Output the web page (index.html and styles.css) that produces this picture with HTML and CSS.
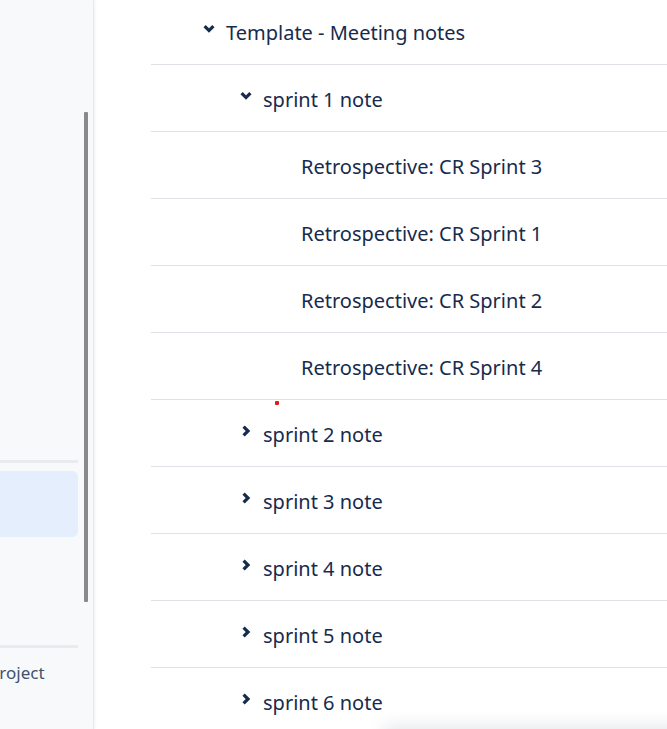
FILE: index.html
```html
<!DOCTYPE html>
<html>
<head>
<meta charset="utf-8">
<link rel="stylesheet" href="styles.css">
</head>
<body>
<div class="app">
  <aside class="sidebar">
    <div class="side-top"></div>
    <div class="side-sep"></div>
    <div class="side-active"></div>
    <div class="side-gap"></div>
    <div class="side-sep"></div>
    <div class="side-item">Project</div>
    <div class="scrollbar"></div>
  </aside>
  <main class="main">
    <ul class="tree">
      <li class="row lvl0"><span class="chev"><svg viewBox="0 0 26 26" width="26" height="26"><path d="M4.6 8.2 L9 12.6 L13.4 8.2" /></svg></span><span class="label">Template - Meeting notes</span></li>
      <li class="row lvl1"><span class="chev"><svg viewBox="0 0 26 26" width="26" height="26"><path d="M4.6 8.2 L9 12.6 L13.4 8.2" /></svg></span><span class="label">sprint 1 note</span></li>
      <li class="row lvl2"><span class="chev"></span><span class="label">Retrospective: CR Sprint 3</span></li>
      <li class="row lvl2"><span class="chev"></span><span class="label">Retrospective: CR Sprint 1</span></li>
      <li class="row lvl2"><span class="chev"></span><span class="label">Retrospective: CR Sprint 2</span></li>
      <li class="row lvl2"><span class="chev"></span><span class="label">Retrospective: CR Sprint 4</span></li>
      <li class="row lvl1"><span class="chev"><svg viewBox="0 0 26 26" width="26" height="26"><path d="M6.6 6.6 L11 11 L6.6 15.4" /></svg></span><span class="label">sprint 2 note</span><span class="dot"></span></li>
      <li class="row lvl1"><span class="chev"><svg viewBox="0 0 26 26" width="26" height="26"><path d="M6.6 6.6 L11 11 L6.6 15.4" /></svg></span><span class="label">sprint 3 note</span></li>
      <li class="row lvl1"><span class="chev"><svg viewBox="0 0 26 26" width="26" height="26"><path d="M6.6 6.6 L11 11 L6.6 15.4" /></svg></span><span class="label">sprint 4 note</span></li>
      <li class="row lvl1"><span class="chev"><svg viewBox="0 0 26 26" width="26" height="26"><path d="M6.6 6.6 L11 11 L6.6 15.4" /></svg></span><span class="label">sprint 5 note</span></li>
      <li class="row lvl1"><span class="chev"><svg viewBox="0 0 26 26" width="26" height="26"><path d="M6.6 6.6 L11 11 L6.6 15.4" /></svg></span><span class="label">sprint 6 note</span></li>
    </ul>
    <div class="floating"></div>
  </main>
</div>
</body>
</html>
```
FILE: styles.css
```css
* { box-sizing: border-box; }
html, body {
  margin: 0;
  padding: 0;
  height: 729px;
  overflow: hidden;
  background: #ffffff;
  font-family: "Noto Sans", "Open Sans", sans-serif;
}
.app {
  display: flex;
  height: 729px;
}
.sidebar {
  position: relative;
  width: 94px;
  flex: none;
  background: #f8f9fb;
  border-right: 1px solid #e6e8ec;
  box-shadow: 1px 0 3px rgba(9, 30, 66, 0.06);
  overflow: hidden;
  display: flex;
  flex-direction: column;
  padding-right: 15px;
}
.side-top { height: 460px; flex: none; }
.side-sep {
  height: 3px;
  background: #e9ebee;
  flex: none;
}
.side-active {
  margin-top: 8px;
  height: 66px;
  background: #e4eefc;
  border-radius: 0 6px 6px 0;
  flex: none;
}
.side-gap { height: 108px; flex: none; }
.side-item {
  margin-top: 14px;
  margin-left: -11px;
  font-size: 17px;
  color: #42526e;
  white-space: nowrap;
  line-height: 22px;
}
.scrollbar {
  position: absolute;
  left: 84px;
  top: 112px;
  width: 4px;
  height: 490px;
  background: #8a8a8a;
  border-radius: 1px;
}
.main {
  position: relative;
  flex: 1;
  overflow: hidden;
}
.tree {
  list-style: none;
  margin: -2px 0 0 57px;
  padding: 0;
}
.row {
  position: relative;
  display: flex;
  align-items: center;
  height: 67px;
  border-bottom: 1px solid #dfe1e6;
  color: #172b4d;
  font-size: 20px;
  white-space: nowrap;
}
.lvl0 { padding-left: 49px; }
.lvl1 { padding-left: 86px; }
.lvl2 { padding-left: 124px; }
.chev {
  width: 26px;
  height: 26px;
  flex: none;
  display: flex;
}
.chev svg path {
  fill: none;
  stroke: #172b4d;
  stroke-width: 3.2;
  stroke-linecap: butt;
  stroke-linejoin: miter;
}
.label {
  line-height: 26px;
  padding-top: 4px;
}
.dot {
  position: absolute;
  left: 124px;
  top: 1px;
  width: 4px;
  height: 4px;
  background: #e5191c;
  border-radius: 1px;
}
.floating {
  position: absolute;
  left: 290px;
  top: 729px;
  width: 500px;
  height: 100px;
  background: #fff;
  box-shadow: 0 -2px 18px rgba(9, 30, 66, 0.12);
  border-radius: 6px;
}
```
